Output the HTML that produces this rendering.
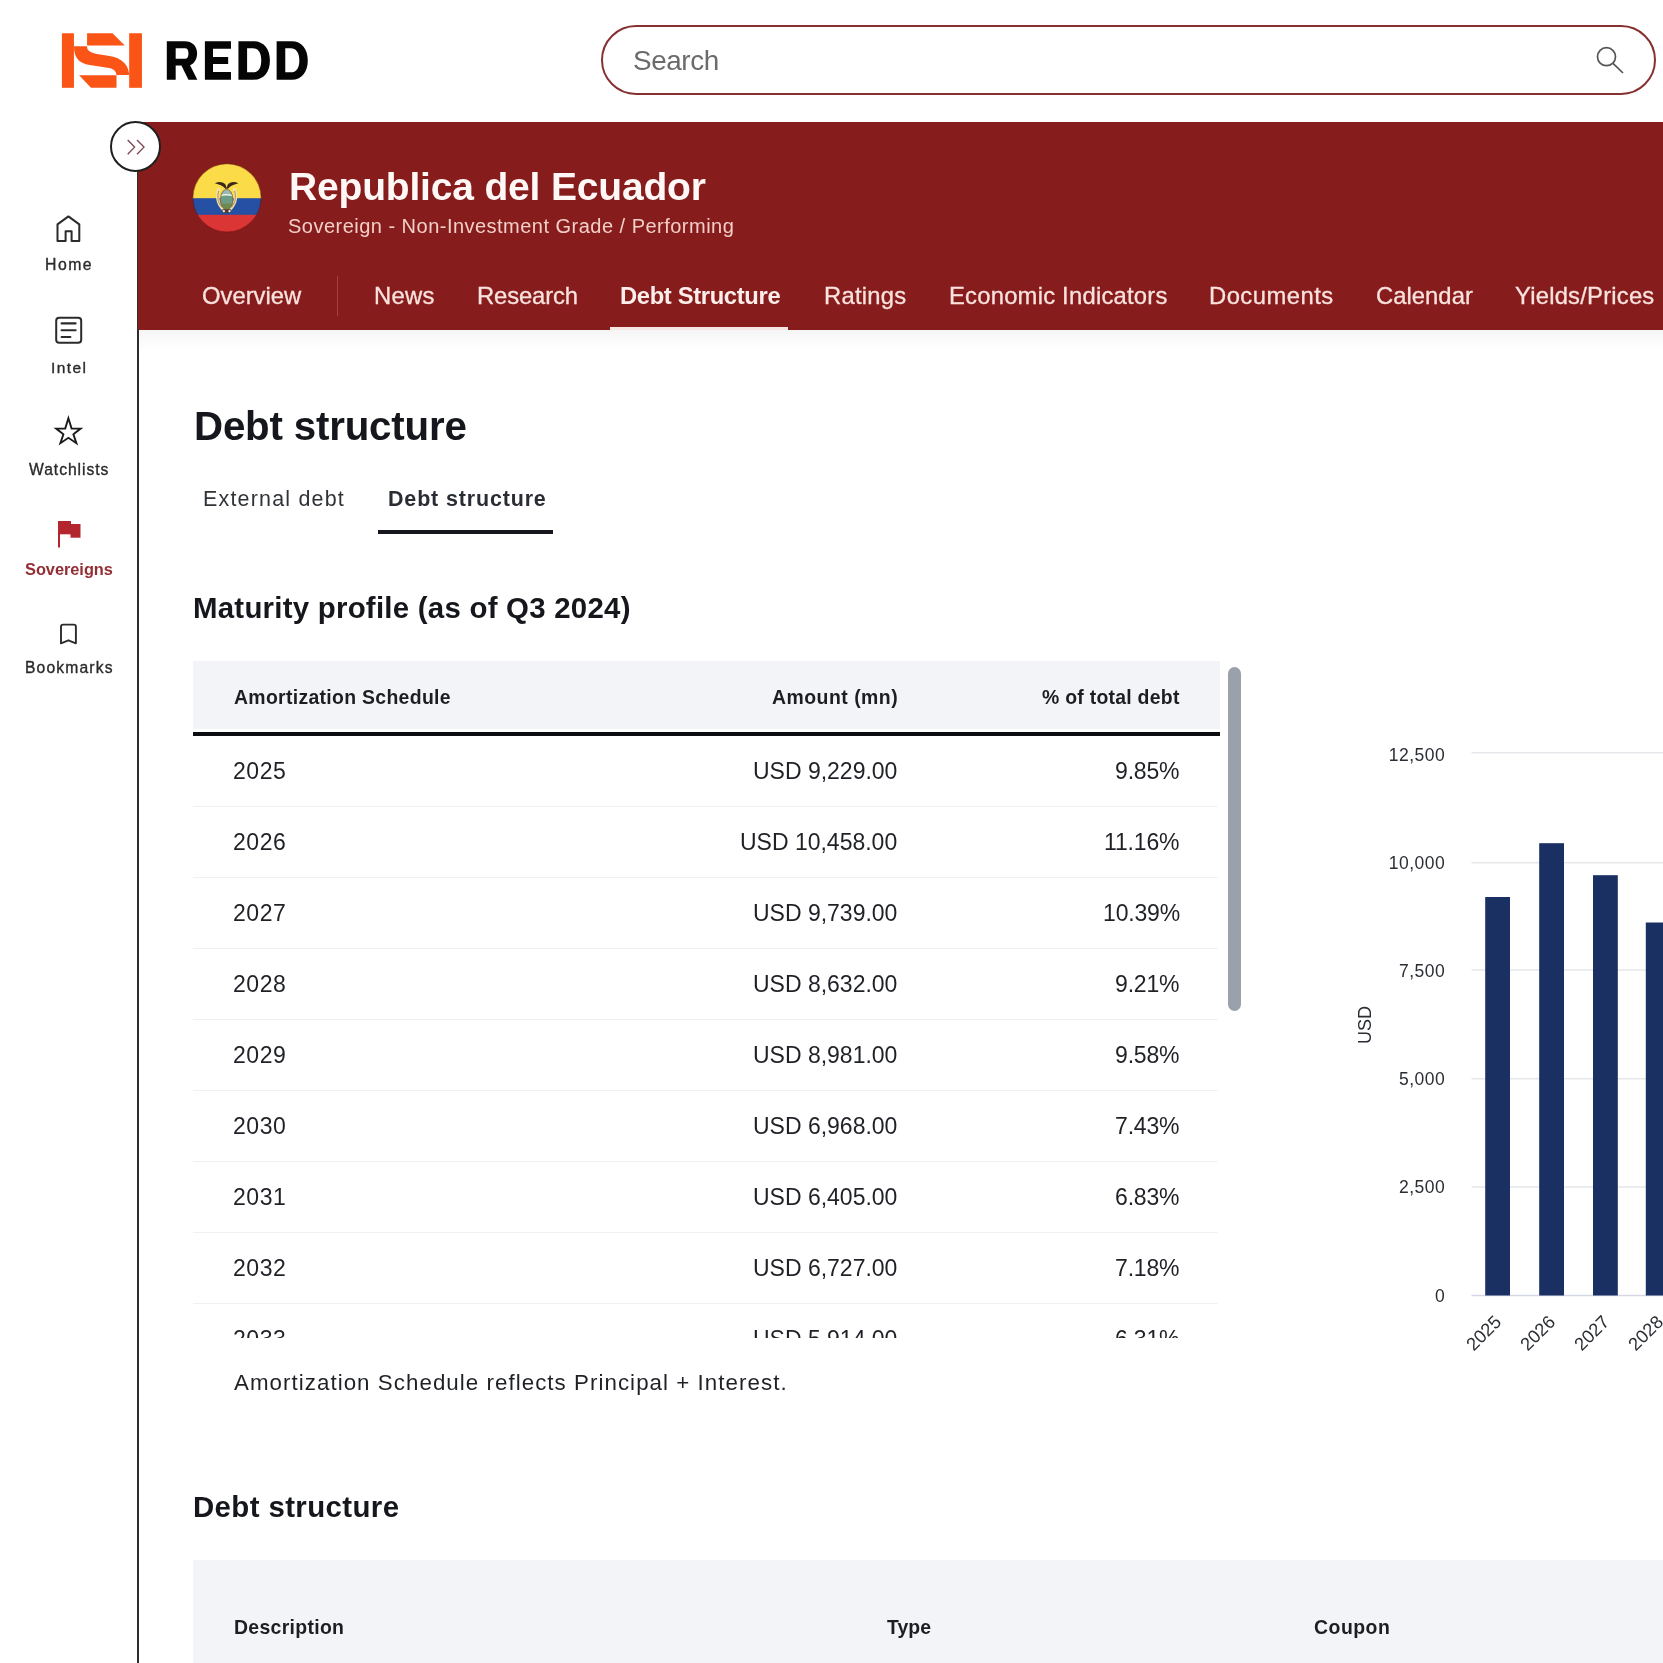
<!DOCTYPE html>
<html><head><meta charset="utf-8">
<style>
html,body{margin:0;padding:0;width:1663px;height:1663px;overflow:hidden;background:#ffffff;}
body{position:relative;font-family:"Liberation Sans",sans-serif;}
.t{position:absolute;white-space:nowrap;line-height:1;will-change:transform;}
.abs{position:absolute;}
</style></head><body>
<!-- logo -->
<svg class="abs" style="left:50px;top:20px" width="110" height="80" viewBox="0 0 1663 1209">
<g fill="#fa5516">
<rect x="180" y="200" width="182" height="825"/>
<rect x="1197" y="200" width="193" height="825"/>
<path d="M560 200 L945 200 L1130 385 L560 385 Z"/>
<path d="M440 835 L1005 835 L1005 1025 L620 1025 Z"/>
<path d="M362 395 L560 395 C560 470 610 495 760 520 L900 543 C1100 580 1190 680 1197 830 L1005 830 C995 760 950 735 870 722 L600 680 C430 650 362 560 362 395 Z"/>
</g></svg>
<svg class="abs" style="left:150px;top:25px" width="180" height="70" viewBox="0 0 1663 647">
<g fill="#050505">
<path d="M155 150 L320 150 C390 150 435 195 435 262 C435 320 405 360 370 372 L437 505 L355 505 L290 375 L237 375 L237 505 L155 505 Z M237 215 L237 312 L322 312 C345 312 355 295 355 263 C355 232 345 215 322 215 Z" fill-rule="evenodd"/>
<path d="M507 150 L748 150 L748 220 L582 220 L582 295 L722 295 L722 360 L582 360 L582 435 L748 435 L748 505 L507 505 Z"/>
<path d="M817 150 L960 150 C1050 150 1108 220 1108 327 C1108 435 1050 505 960 505 L817 505 Z M897 215 L897 437 L950 437 C1000 437 1028 400 1028 327 C1028 255 1000 215 950 215 Z" fill-rule="evenodd"/>
<path d="M1170 150 L1310 150 C1400 150 1458 220 1458 327 C1458 435 1400 505 1310 505 L1170 505 Z M1250 215 L1250 437 L1300 437 C1350 437 1380 400 1380 327 C1380 255 1350 215 1300 215 Z" fill-rule="evenodd"/>
</g></svg>
<!-- search -->
<div class="abs" style="left:600.5px;top:25.3px;width:1051px;height:65.5px;border:2.4px solid #86302f;border-radius:35px;background:#fff;"></div>
<svg class="abs" style="left:1590px;top:40px" width="40" height="40" viewBox="0 0 40 40">
<circle cx="16.5" cy="16.7" r="9" fill="none" stroke="#555" stroke-width="1.7"/>
<line x1="23" y1="23.3" x2="33" y2="33" stroke="#555" stroke-width="1.7"/>
</svg>
<!-- sidebar line -->
<div class="abs" style="left:136.5px;top:122px;width:2px;height:1541px;background:#2e2e2e;"></div>
<!-- banner -->
<div class="abs" style="left:138px;top:122px;width:1525px;height:207.5px;background:#861c1c;"></div>
<div class="abs" style="left:139px;top:329.5px;width:1524px;height:22px;background:linear-gradient(#f5f5f5,#fbfbfb 45%,#ffffff);"></div>
<!-- collapse -->
<div class="abs" style="left:110.2px;top:121.2px;width:47px;height:47px;border:2px solid #1f1f1f;border-radius:50%;background:#fff;"></div>
<svg class="abs" style="left:120px;top:132px" width="32" height="30" viewBox="120 132 32 30">
<path d="M127.7 140 L134.6 147.1 L127.7 154.3 M137 140 L144 147.1 L137 154.3" fill="none" stroke="#7d4552" stroke-width="1.35"/>
</svg>
<!-- flag circle -->
<svg class="abs" style="left:190px;top:161px" width="74" height="74" viewBox="190 161 74 74">
<defs><clipPath id="fc"><circle cx="227" cy="197.9" r="34.2"/></clipPath></defs>
<g clip-path="url(#fc)">
<rect x="190" y="161" width="74" height="38" fill="#fbdc48"/>
<rect x="190" y="198.2" width="74" height="16.8" fill="#2550a3"/>
<rect x="190" y="214.8" width="74" height="22" fill="#dc3535"/>
</g>
<circle cx="227" cy="197.9" r="34" fill="none" stroke="rgba(80,0,0,0.35)" stroke-width="1"/>
</svg>
<svg class="abs" style="left:185px;top:155px" width="85" height="85" viewBox="0 0 1663 1663">
<path d="M640 640 C585 760 585 960 740 1095 L790 1080 C660 960 650 780 700 660 Z" fill="#efe4a8"/>
<path d="M990 640 C1045 760 1045 960 890 1095 L840 1080 C970 960 980 780 930 660 Z" fill="#efe4a8"/>
<path d="M660 700 C630 800 640 930 720 1020" fill="none" stroke="#b89a60" stroke-width="22"/>
<path d="M970 700 C1000 800 990 930 910 1020" fill="none" stroke="#b89a60" stroke-width="22"/>
<ellipse cx="815" cy="870" rx="130" ry="205" fill="#8a6a48"/>
<defs><clipPath id="sh"><ellipse cx="815" cy="870" rx="112" ry="188"/></clipPath></defs>
<g clip-path="url(#sh)">
<rect x="690" y="670" width="250" height="420" fill="#6f9c84"/>
<rect x="690" y="670" width="250" height="105" fill="#9cb8b0"/>
<path d="M690 775 C760 760 870 760 940 775 L940 805 C870 790 760 790 690 805 Z" fill="#e4f4ee"/>
<rect x="690" y="950" width="250" height="140" fill="#6b8a50"/>
</g>
<path d="M585 555 C660 510 750 520 795 580 L815 645 L835 580 C880 520 970 510 1045 555 C960 575 890 610 840 660 L790 660 C740 610 670 575 585 555 Z" fill="#3b2a1c"/>
<path d="M730 1060 L900 1060 L890 1130 L740 1130 Z" fill="#5a3a2a"/>
<circle cx="760" cy="1100" r="22" fill="#f4efe0"/>
<circle cx="870" cy="1100" r="22" fill="#f4efe0"/>
</svg>
<!-- nav separator / active underline -->
<div class="abs" style="left:336.5px;top:276px;width:1.5px;height:40px;background:#a9403e;"></div>
<div class="abs" style="left:610.3px;top:326.5px;width:178px;height:3.5px;background:#f6e6e4;"></div>
<!-- sidebar icons -->
<svg class="abs" style="left:0;top:200px" width="138" height="460" viewBox="0 200 138 460">
<g fill="none" stroke="#2b2b2b" stroke-width="2" stroke-linejoin="round">
<path d="M57.5 241 L57.5 224.4 L68.4 216.4 L79.3 224.4 L79.3 241 L71.6 241 L71.6 231.2 L65.6 231.2 L65.6 241 Z"/>
<rect x="56.2" y="317.8" width="25" height="25" rx="3"/>
<path d="M61.6 323.4 H75.6 M61.6 330.2 H75.6 M61.6 337 H70.4" stroke-width="2.1" stroke-linecap="round"/>
<path d="M68.4 418.2 L71.6 428.6 L80.6 428.6 L73.4 434.3 L76.4 443.2 L68.4 437.8 L60.4 443.2 L63.4 434.3 L56.2 428.6 L65.2 428.6 Z" stroke-width="1.9" stroke-linejoin="miter" stroke="#1a1a1a"/>
<path d="M61 643.3 V626.8 Q61 624.6 63.2 624.6 H73.7 Q75.9 624.6 75.9 626.8 V643.3 L68.4 640.3 Z" stroke-width="1.9"/>
</g>
<g fill="#b3262d">
<rect x="58" y="521" width="2" height="26.5"/>
<rect x="60" y="521" width="11" height="13.3"/>
<rect x="70.5" y="524" width="10" height="13.7"/>
</g>
</svg>
<!-- tab underline -->
<div class="abs" style="left:378px;top:530px;width:175px;height:3.5px;background:#15171c;"></div>
<!-- table -->
<div class="abs" style="left:193px;top:661px;width:1027px;height:68px;background:#f3f4f7;"></div>
<div class="abs" style="left:193px;top:732px;width:1027px;height:3.6px;background:#0c0d10;"></div>
<div id="rowlines"></div>
<div class="abs" style="left:193px;top:805.5px;width:1025px;height:1.2px;background:#f0f1f3;"></div>
<div class="abs" style="left:193px;top:876.5px;width:1025px;height:1.2px;background:#f0f1f3;"></div>
<div class="abs" style="left:193px;top:947.5px;width:1025px;height:1.2px;background:#f0f1f3;"></div>
<div class="abs" style="left:193px;top:1018.5px;width:1025px;height:1.2px;background:#f0f1f3;"></div>
<div class="abs" style="left:193px;top:1089.5px;width:1025px;height:1.2px;background:#f0f1f3;"></div>
<div class="abs" style="left:193px;top:1160.5px;width:1025px;height:1.2px;background:#f0f1f3;"></div>
<div class="abs" style="left:193px;top:1231.5px;width:1025px;height:1.2px;background:#f0f1f3;"></div>
<div class="abs" style="left:193px;top:1302.5px;width:1025px;height:1.2px;background:#f0f1f3;"></div>
<div class="abs" style="left:1227.5px;top:667px;width:13.5px;height:344px;border-radius:7px;background:#9aa1ab;"></div>
<!-- lower table -->
<div class="abs" style="left:193px;top:1560px;width:1470px;height:103px;background:#f3f4f7;"></div>
<!-- chart -->
<svg class="abs" style="left:1330px;top:720px;will-change:transform" width="333" height="660" viewBox="1330 720 333 660">
<g stroke="#e6e7ea" stroke-width="1.5">
<line x1="1471.5" y1="752.8" x2="1663" y2="752.8"/>
<line x1="1471.5" y1="862.7" x2="1663" y2="862.7"/>
<line x1="1471.5" y1="970.1" x2="1663" y2="970.1"/>
<line x1="1471.5" y1="1078.8" x2="1663" y2="1078.8"/>
<line x1="1471.5" y1="1187" x2="1663" y2="1187"/>
</g>
<line x1="1471.5" y1="1295.5" x2="1663" y2="1295.5" stroke="#d5d9e6" stroke-width="1.5"/>
<g fill="#1b3062">
<rect x="1485.2" y="897" width="24.8" height="398.5"/>
<rect x="1539.2" y="843.2" width="24.8" height="452.3"/>
<rect x="1593" y="875.2" width="24.8" height="420.3"/>
<rect x="1645.8" y="922.5" width="24.8" height="373"/>
</g>
<g font-family="Liberation Sans" font-size="17.5" fill="#2a2d33" text-anchor="end" letter-spacing="0.5">
<text x="1445.3" y="760.5">12,500</text>
<text x="1445.3" y="868.8">10,000</text>
<text x="1445.3" y="976.5">7,500</text>
<text x="1445.3" y="1085">5,000</text>
<text x="1445.3" y="1193.3">2,500</text>
<text x="1445.3" y="1301.5">0</text>
</g>
<text x="0" y="0" font-family="Liberation Sans" font-size="18" fill="#2a2d33" text-anchor="middle" transform="translate(1371 1025) rotate(-90)">USD</text>
<g font-family="Liberation Sans" font-size="18.3" fill="#2a2d33" text-anchor="end">
<text transform="translate(1502.5 1323) rotate(-45)">2025</text>
<text transform="translate(1556.5 1323) rotate(-45)">2026</text>
<text transform="translate(1610.5 1323) rotate(-45)">2027</text>
<text transform="translate(1664.5 1323) rotate(-45)">2028</text>
</g>
</svg>
<div class="t" style="left:45.00px;top:257.23px;font-size:15.80px;font-weight:normal;color:#2a2a2a;letter-spacing:1.500px;-webkit-text-stroke:0.35px #2a2a2a;">Home</div>
<div class="t" style="left:50.75px;top:359.90px;font-size:15.51px;font-weight:normal;color:#2a2a2a;letter-spacing:1.438px;-webkit-text-stroke:0.35px #2a2a2a;">Intel</div>
<div class="t" style="left:29.30px;top:461.58px;font-size:15.65px;font-weight:normal;color:#2a2a2a;letter-spacing:0.972px;-webkit-text-stroke:0.35px #2a2a2a;">Watchlists</div>
<div class="t" style="left:24.60px;top:561.27px;font-size:16.38px;font-weight:bold;color:#932e35;letter-spacing:-0.033px;">Sovereigns</div>
<div class="t" style="left:24.80px;top:660.27px;font-size:15.65px;font-weight:normal;color:#2a2a2a;letter-spacing:1.156px;-webkit-text-stroke:0.35px #2a2a2a;">Bookmarks</div>
<div class="t" style="left:632.95px;top:46.83px;font-size:27.83px;font-weight:normal;color:#6b6b6b;letter-spacing:-0.400px;">Search</div>
<div class="t" style="left:288.50px;top:167.02px;font-size:38.99px;font-weight:bold;color:#fff8f6;letter-spacing:-0.170px;">Republica del Ecuador</div>
<div class="t" style="left:287.90px;top:215.88px;font-size:20.00px;font-weight:normal;color:#f3cfc9;letter-spacing:0.481px;">Sovereign - Non-Investment Grade / Performing</div>
<div class="t" style="left:202.35px;top:283.75px;font-size:23.80px;font-weight:normal;color:#fae2de;letter-spacing:0.007px;-webkit-text-stroke:0.3px #fae2de;">Overview</div>
<div class="t" style="left:373.60px;top:283.62px;font-size:23.80px;font-weight:normal;color:#fae2de;letter-spacing:0.267px;-webkit-text-stroke:0.3px #fae2de;">News</div>
<div class="t" style="left:476.50px;top:283.62px;font-size:23.80px;font-weight:normal;color:#fae2de;letter-spacing:-0.121px;-webkit-text-stroke:0.3px #fae2de;">Research</div>
<div class="t" style="left:620.20px;top:283.62px;font-size:23.77px;font-weight:bold;color:#fdeeec;letter-spacing:-0.342px;">Debt Structure</div>
<div class="t" style="left:824.00px;top:283.62px;font-size:23.80px;font-weight:normal;color:#fae2de;letter-spacing:0.258px;-webkit-text-stroke:0.3px #fae2de;">Ratings</div>
<div class="t" style="left:948.50px;top:283.62px;font-size:23.80px;font-weight:normal;color:#fae2de;letter-spacing:0.225px;-webkit-text-stroke:0.3px #fae2de;">Economic Indicators</div>
<div class="t" style="left:1209.00px;top:283.62px;font-size:23.80px;font-weight:normal;color:#fae2de;letter-spacing:0.469px;-webkit-text-stroke:0.3px #fae2de;">Documents</div>
<div class="t" style="left:1375.75px;top:283.75px;font-size:23.80px;font-weight:normal;color:#fae2de;letter-spacing:0.036px;-webkit-text-stroke:0.3px #fae2de;">Calendar</div>
<div class="t" style="left:1515.25px;top:283.62px;font-size:23.80px;font-weight:normal;color:#fae2de;letter-spacing:0.217px;-webkit-text-stroke:0.3px #fae2de;">Yields/Prices</div>
<div class="t" style="left:193.55px;top:407.38px;font-size:40.29px;font-weight:bold;color:#15171c;letter-spacing:-0.192px;">Debt structure</div>
<div class="t" style="left:202.85px;top:488.88px;font-size:21.45px;font-weight:normal;color:#303338;letter-spacing:1.200px;">External debt</div>
<div class="t" style="left:388.20px;top:488.88px;font-size:21.45px;font-weight:bold;color:#2a2d33;letter-spacing:0.865px;">Debt structure</div>
<div class="t" style="left:192.90px;top:592.58px;font-size:29.42px;font-weight:bold;color:#15171c;letter-spacing:0.247px;">Maturity profile (as of Q3 2024)</div>
<div class="t" style="left:233.50px;top:688.45px;font-size:19.42px;font-weight:bold;color:#1c1e22;letter-spacing:0.315px;">Amortization Schedule</div>
<div class="t" style="left:771.50px;top:688.45px;font-size:19.42px;font-weight:bold;color:#1c1e22;letter-spacing:0.495px;">Amount (mn)</div>
<div class="t" style="left:1041.50px;top:688.33px;font-size:19.42px;font-weight:bold;color:#1c1e22;letter-spacing:0.264px;">% of total debt</div>
<div class="t" style="left:232.75px;top:760.27px;font-size:23.00px;font-weight:normal;color:#1f2126;letter-spacing:0.575px;">2025</div>
<div class="t" style="left:752.99px;top:760.02px;font-size:23.00px;font-weight:normal;color:#1f2126;letter-spacing:-0.008px;">USD 9,229.00</div>
<div class="t" style="left:1115.16px;top:760.14px;font-size:23.00px;font-weight:normal;color:#1f2126;letter-spacing:-0.166px;">9.85%</div>
<div class="t" style="left:232.75px;top:831.27px;font-size:23.00px;font-weight:normal;color:#1f2126;letter-spacing:0.575px;">2026</div>
<div class="t" style="left:740.00px;top:831.02px;font-size:23.00px;font-weight:normal;color:#1f2126;letter-spacing:-0.008px;">USD 10,458.00</div>
<div class="t" style="left:1104.33px;top:831.14px;font-size:23.00px;font-weight:normal;color:#1f2126;letter-spacing:-0.166px;">11.16%</div>
<div class="t" style="left:232.75px;top:902.27px;font-size:23.00px;font-weight:normal;color:#1f2126;letter-spacing:0.575px;">2027</div>
<div class="t" style="left:752.99px;top:902.02px;font-size:23.00px;font-weight:normal;color:#1f2126;letter-spacing:-0.008px;">USD 9,739.00</div>
<div class="t" style="left:1102.58px;top:902.14px;font-size:23.00px;font-weight:normal;color:#1f2126;letter-spacing:-0.166px;">10.39%</div>
<div class="t" style="left:232.75px;top:973.27px;font-size:23.00px;font-weight:normal;color:#1f2126;letter-spacing:0.575px;">2028</div>
<div class="t" style="left:752.99px;top:973.02px;font-size:23.00px;font-weight:normal;color:#1f2126;letter-spacing:-0.008px;">USD 8,632.00</div>
<div class="t" style="left:1115.16px;top:973.14px;font-size:23.00px;font-weight:normal;color:#1f2126;letter-spacing:-0.166px;">9.21%</div>
<div class="t" style="left:232.75px;top:1044.27px;font-size:23.00px;font-weight:normal;color:#1f2126;letter-spacing:0.575px;">2029</div>
<div class="t" style="left:752.99px;top:1044.02px;font-size:23.00px;font-weight:normal;color:#1f2126;letter-spacing:-0.008px;">USD 8,981.00</div>
<div class="t" style="left:1115.16px;top:1044.14px;font-size:23.00px;font-weight:normal;color:#1f2126;letter-spacing:-0.166px;">9.58%</div>
<div class="t" style="left:232.75px;top:1115.27px;font-size:23.00px;font-weight:normal;color:#1f2126;letter-spacing:0.575px;">2030</div>
<div class="t" style="left:752.99px;top:1115.02px;font-size:23.00px;font-weight:normal;color:#1f2126;letter-spacing:-0.008px;">USD 6,968.00</div>
<div class="t" style="left:1115.16px;top:1115.14px;font-size:23.00px;font-weight:normal;color:#1f2126;letter-spacing:-0.166px;">7.43%</div>
<div class="t" style="left:232.75px;top:1186.27px;font-size:23.00px;font-weight:normal;color:#1f2126;letter-spacing:0.575px;">2031</div>
<div class="t" style="left:752.99px;top:1186.02px;font-size:23.00px;font-weight:normal;color:#1f2126;letter-spacing:-0.008px;">USD 6,405.00</div>
<div class="t" style="left:1115.16px;top:1186.14px;font-size:23.00px;font-weight:normal;color:#1f2126;letter-spacing:-0.166px;">6.83%</div>
<div class="t" style="left:232.75px;top:1257.27px;font-size:23.00px;font-weight:normal;color:#1f2126;letter-spacing:0.575px;">2032</div>
<div class="t" style="left:752.99px;top:1257.02px;font-size:23.00px;font-weight:normal;color:#1f2126;letter-spacing:-0.008px;">USD 6,727.00</div>
<div class="t" style="left:1115.16px;top:1257.14px;font-size:23.00px;font-weight:normal;color:#1f2126;letter-spacing:-0.166px;">7.18%</div>
<div class="t" style="left:232.75px;top:1328.27px;font-size:23.00px;font-weight:normal;color:#1f2126;letter-spacing:0.575px;clip-path:inset(0 0 calc(100% - 10px) 0);">2033</div>
<div class="t" style="left:752.99px;top:1328.02px;font-size:23.00px;font-weight:normal;color:#1f2126;letter-spacing:-0.008px;clip-path:inset(0 0 calc(100% - 10px) 0);">USD 5,914.00</div>
<div class="t" style="left:1115.16px;top:1328.14px;font-size:23.00px;font-weight:normal;color:#1f2126;letter-spacing:-0.166px;clip-path:inset(0 0 calc(100% - 10px) 0);">6.31%</div>
<div class="t" style="left:234.00px;top:1372.35px;font-size:22.32px;font-weight:normal;color:#1f2126;letter-spacing:1.048px;">Amortization Schedule reflects Principal + Interest.</div>
<div class="t" style="left:192.50px;top:1492.18px;font-size:29.42px;font-weight:bold;color:#15171c;letter-spacing:0.385px;">Debt structure</div>
<div class="t" style="left:234.25px;top:1618.45px;font-size:19.42px;font-weight:bold;color:#1c1e22;letter-spacing:0.315px;">Description</div>
<div class="t" style="left:886.55px;top:1618.45px;font-size:19.42px;font-weight:bold;color:#1c1e22;letter-spacing:0.067px;">Type</div>
<div class="t" style="left:1313.75px;top:1618.33px;font-size:19.42px;font-weight:bold;color:#1c1e22;letter-spacing:0.510px;">Coupon</div>
</body></html>
